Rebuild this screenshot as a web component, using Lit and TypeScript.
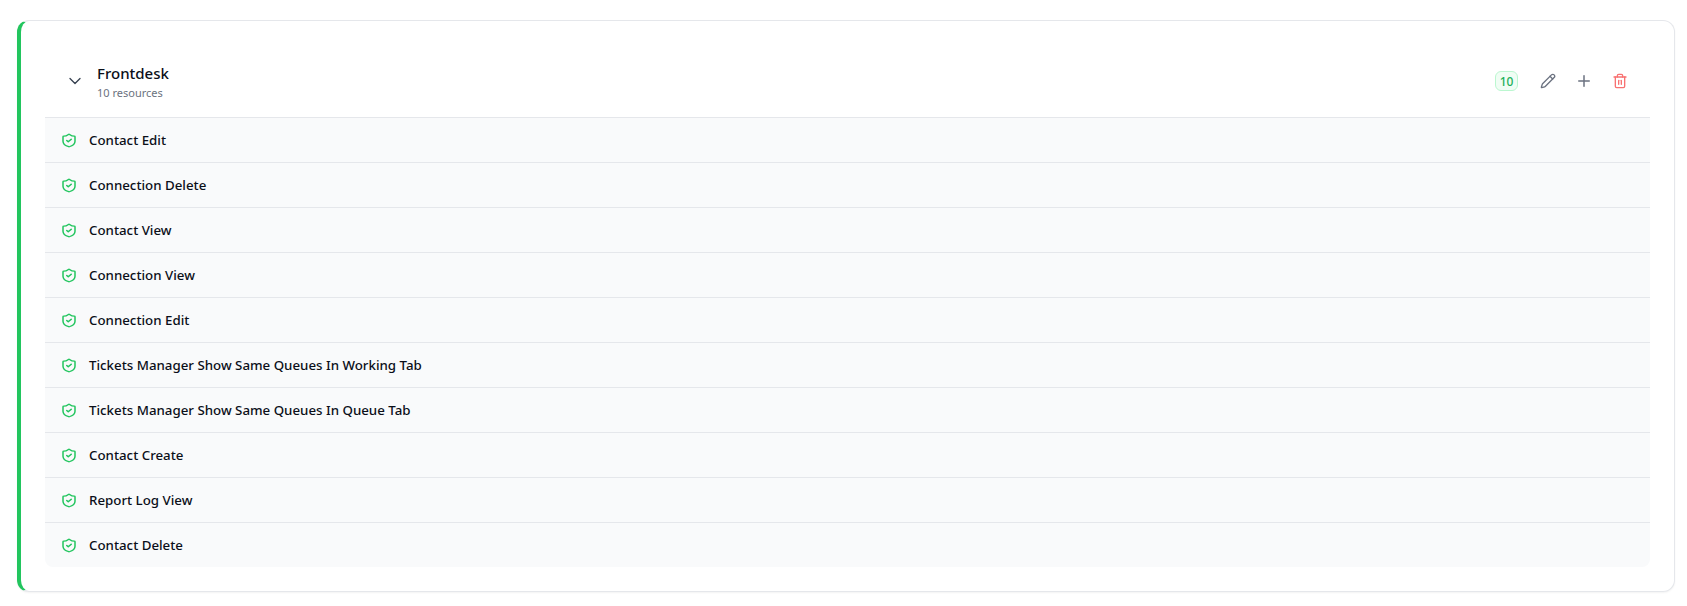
import { LitElement, html, css, svg } from "lit";
import { customElement } from "lit/decorators.js";

const ITEMS = [
  "Contact Edit",
  "Connection Delete",
  "Contact View",
  "Connection View",
  "Connection Edit",
  "Tickets Manager Show Same Queues In Working Tab",
  "Tickets Manager Show Same Queues In Queue Tab",
  "Contact Create",
  "Report Log View",
  "Contact Delete",
];

const icon = (body: unknown) => html`<svg
  viewBox="0 0 24 24"
  fill="none"
  stroke="currentColor"
  stroke-width="2"
  stroke-linecap="round"
  stroke-linejoin="round"
>${body}</svg>`;

const SHIELD = svg`<path d="M20 13c0 5-3.5 7.5-7.66 8.95a1 1 0 0 1-.67-.01C7.5 20.5 4 18 4 13V6a1 1 0 0 1 1-1c2 0 4.5-1.2 6.24-2.72a1.17 1.17 0 0 1 1.52 0C14.51 3.81 17 5 19 5a1 1 0 0 1 1 1z"/><path d="m9 12 2 2 4-4"/>`;
const CHEVRON = svg`<path d="m6 9 6 6 6-6"/>`;
const PENCIL = svg`<path d="M21.174 6.812a1 1 0 0 0-3.986-3.987L3.842 16.174a2 2 0 0 0-.5.83l-1.321 4.352a.5.5 0 0 0 .623.622l4.353-1.32a2 2 0 0 0 .83-.497z"/><path d="m15 5 4 4"/>`;
const PLUS = svg`<path d="M5 12h14"/><path d="M12 5v14"/>`;
const TRASH = svg`<path d="M3 6h18"/><path d="M19 6v14c0 1-1 2-2 2H7c-1 0-2-1-2-2V6"/><path d="M8 6V4c0-1 1-2 2-2h4c1 0 2 1 2 2v2"/><path d="M10 11v6"/><path d="M14 11v6"/>`;

@customElement("app-root")
export class AppRoot extends LitElement {
  static styles = css`
    :host {
      display: block;
      font-family: "Noto Sans", sans-serif;
      padding: 20px 12px 0 17px;
      background: #fff;
      height: 606px;
      box-sizing: border-box;
    }
    .card {
      border: 1px solid #e5e7eb;
      border-left: 4px solid #22c55e;
      border-radius: 12px;
      padding: 24px;
      background: #fff;
      box-shadow: 0 1px 2px rgba(0, 0, 0, 0.05);
    }
    .head {
      display: flex;
      align-items: center;
      gap: 8px;
      padding: 16px;
      height: 72px;
      box-sizing: border-box;
    }
    .btn {
      width: 28px;
      height: 28px;
      display: flex;
      align-items: center;
      justify-content: center;
      flex: none;
    }
    .btn svg {
      width: 16px;
      height: 16px;
      display: block;
    }
    .chev {
      color: #374151;
    }
    .chev svg {
      width: 20px;
      height: 20px;
      stroke-width: 1.6;
    }
    .info {
      flex: 1;
    }
    .title {
      font-size: 15px;
      font-weight: 500;
      color: #0b0f19;
      line-height: 24px;
    }
    .sub {
      font-size: 11px;
      color: #6b7280;
      line-height: 16px;
    }
    .side {
      display: flex;
      align-items: center;
      gap: 8px;
    }
    .badge {
      font-size: 12px;
      font-weight: 500;
      color: #22b05a;
      background: #f0fdf4;
      border: 1px solid #bbf7d0;
      border-radius: 6px;
      width: 23px;
      height: 20px;
      box-sizing: border-box;
      display: flex;
      align-items: center;
      justify-content: center;
      margin-right: 8px;
    }
    .gray {
      color: #6b7280;
    }
    .gray .plus {
      width: 18px;
      height: 18px;
    }
    .red {
      color: #f87171;
    }
    .list {
      background: #f9fafb;
      border-radius: 0 0 8px 8px;
    }
    .row {
      display: flex;
      align-items: center;
      gap: 12px;
      height: 45px;
      box-sizing: border-box;
      border-top: 1px solid #e5e7eb;
      padding: 0 16px;
      font-size: 13.3px;
      font-weight: 500;
      color: #0b0f19;
      line-height: 20px;
    }
    .shield {
      width: 18px;
      height: 15px;
      margin: 0 -1px;
      color: #22c55e;
      flex: none;
    }
  `;

  render() {
    return html`
      <div class="card">
        <div class="head">
          <div class="btn chev">${icon(CHEVRON)}</div>
          <div class="info">
            <div class="title">Frontdesk</div>
            <div class="sub">10 resources</div>
          </div>
          <div class="side">
            <span class="badge">10</span>
            <div class="btn gray">${icon(PENCIL)}</div>
            <div class="btn gray"><svg class="plus" viewBox="0 0 24 24" fill="none" stroke="currentColor" stroke-width="2" stroke-linecap="round" stroke-linejoin="round">${PLUS}</svg></div>
            <div class="btn red">${icon(TRASH)}</div>
          </div>
        </div>
        <div class="list">
          ${ITEMS.map(
            (t) => html`<div class="row"><svg class="shield" viewBox="0 0 24 24" preserveAspectRatio="none" fill="none" stroke="currentColor" stroke-width="2" stroke-linecap="round" stroke-linejoin="round">${SHIELD}</svg><span>${t}</span></div>`
          )}
        </div>
      </div>
    `;
  }
}
